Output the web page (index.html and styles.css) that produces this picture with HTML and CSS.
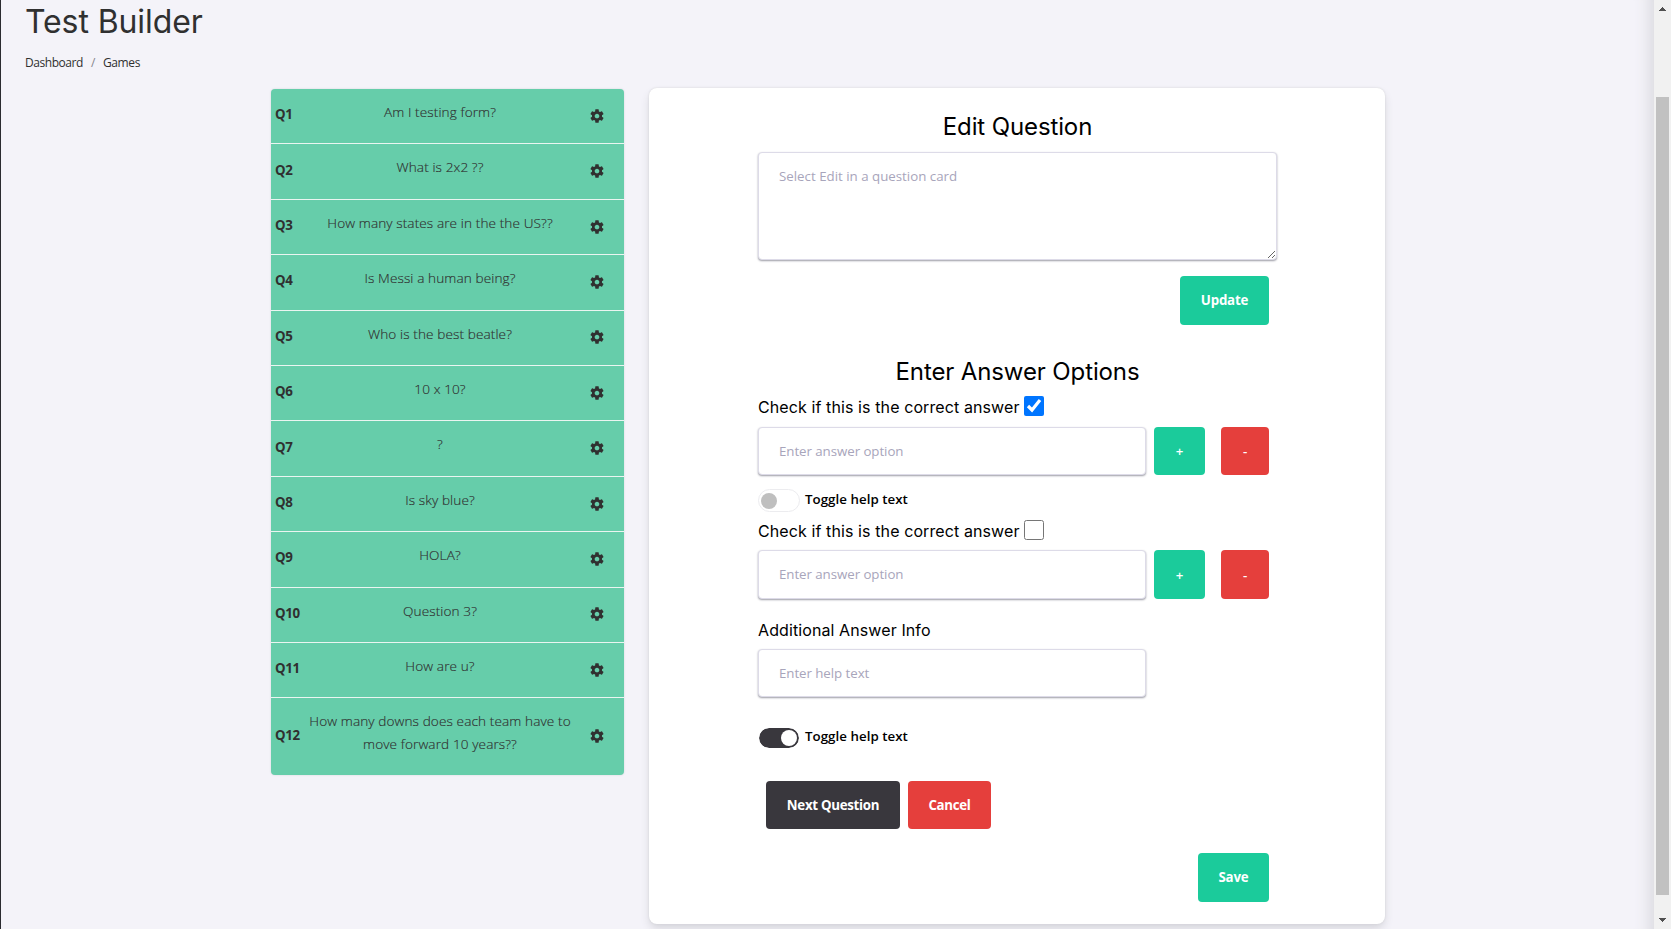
FILE: index.html
```
<!DOCTYPE html>
<html lang="en">
<head>
<meta charset="utf-8">
<title>Test Builder</title>
<link rel="stylesheet" href="styles.css">
</head>
<body>
<svg class="defs" width="0" height="0" aria-hidden="true">
  <symbol id="gear" viewBox="0 0 24 24"><path d="M19.43 12.98c.04-.32.07-.64.07-.98s-.03-.66-.07-.98l2.11-1.65c.19-.15.24-.42.12-.64l-2-3.46c-.12-.22-.39-.3-.61-.22l-2.49 1c-.52-.4-1.08-.73-1.69-.98l-.38-2.65A.488.488 0 0 0 14 2h-4c-.25 0-.46.18-.49.42l-.38 2.65c-.61.25-1.17.59-1.69.98l-2.49-1c-.23-.09-.49 0-.61.22l-2 3.46c-.13.22-.07.49.12.64l2.11 1.65c-.04.32-.07.65-.07.98s.03.66.07.98l-2.11 1.65c-.19.15-.24.42-.12.64l2 3.46c.12.22.39.3.61.22l2.49-1c.52.4 1.08.73 1.69.98l.38 2.65c.03.24.24.42.49.42h4c.25 0 .46-.18.49-.42l.38-2.65c.61-.25 1.17-.59 1.69-.98l2.49 1c.23.09.49 0 .61-.22l2-3.46c.12-.22.07-.49-.12-.64l-2.11-1.65zM12 15.5c-1.93 0-3.5-1.57-3.5-3.5s1.570-3.500 3.500-3.500 3.500 1.570 3.500 3.500-1.570 3.500-3.500 3.500z"/></symbol>
</svg>
<div class="app">
  <main class="page">
    <h1 class="title">Test Builder</h1>
    <nav class="crumbs"><span class="crumb-home">Dashboard</span><span class="sep">/</span><span class="crumb-current">Games</span></nav>
    <div class="columns">
      <ul class="questions">
        <li class="question"><b class="num">Q1</b><p class="text">Am I testing form?</p><svg class="gear"><use href="#gear"/></svg></li>
        <li class="question"><b class="num">Q2</b><p class="text">What is 2x2 ??</p><svg class="gear"><use href="#gear"/></svg></li>
        <li class="question"><b class="num">Q3</b><p class="text">How many states are in the the US??</p><svg class="gear"><use href="#gear"/></svg></li>
        <li class="question"><b class="num">Q4</b><p class="text">Is Messi a human being?</p><svg class="gear"><use href="#gear"/></svg></li>
        <li class="question"><b class="num">Q5</b><p class="text">Who is the best beatle?</p><svg class="gear"><use href="#gear"/></svg></li>
        <li class="question"><b class="num">Q6</b><p class="text">10 x 10?</p><svg class="gear"><use href="#gear"/></svg></li>
        <li class="question"><b class="num">Q7</b><p class="text">?</p><svg class="gear"><use href="#gear"/></svg></li>
        <li class="question"><b class="num">Q8</b><p class="text">Is sky blue?</p><svg class="gear"><use href="#gear"/></svg></li>
        <li class="question"><b class="num">Q9</b><p class="text">HOLA?</p><svg class="gear"><use href="#gear"/></svg></li>
        <li class="question"><b class="num">Q10</b><p class="text">Question 3?</p><svg class="gear"><use href="#gear"/></svg></li>
        <li class="question"><b class="num">Q11</b><p class="text">How are u?</p><svg class="gear"><use href="#gear"/></svg></li>
        <li class="question"><b class="num">Q12</b><p class="text">How many downs does each team have to<br>move forward 10 years??</p><svg class="gear"><use href="#gear"/></svg></li>
      </ul>
      <form class="card">
        <h2 class="heading">Edit Question</h2>
        <textarea class="field area" placeholder="Select Edit in a question card"></textarea>
        <div class="actions update-row"><button type="button" class="btn green update">Update</button></div>
        <h2 class="heading">Enter Answer Options</h2>
        <label class="check"><span class="label">Check if this is the correct answer</span><input type="checkbox" class="box" checked></label>
        <div class="answer">
          <input class="field" placeholder="Enter answer option">
          <button type="button" class="btn green plus">+</button>
          <button type="button" class="btn red minus">-</button>
        </div>
        <div class="toggle"><span class="switch"></span><span class="toggle-text">Toggle help text</span></div>
        <label class="check second"><span class="label">Check if this is the correct answer</span><input type="checkbox" class="box"></label>
        <div class="answer tall">
          <input class="field" placeholder="Enter answer option">
          <button type="button" class="btn green plus">+</button>
          <button type="button" class="btn red minus">-</button>
        </div>
        <div class="label info">Additional Answer Info</div>
        <div class="answer"><input class="field" placeholder="Enter help text"></div>
        <div class="toggle lower"><span class="switch on"></span><span class="toggle-text">Toggle help text</span></div>
        <div class="nav-row">
          <button type="button" class="btn dark next">Next Question</button>
          <button type="button" class="btn red cancel">Cancel</button>
        </div>
        <div class="actions"><button type="button" class="btn green save">Save</button></div>
      </form>
    </div>
  </main>
  <div class="scrollbar">
    <svg class="arrow" viewBox="0 0 7 4"><path d="M3 0h1v1h1v1h1v1h1v1H0V3h1V2h1V1h1z"/></svg>
    <div class="thumb"></div>
    <svg class="arrow" viewBox="0 0 7 4"><path d="M0 0h7v1H6v1H5v1H4v1H3V3H2V2H1V1H0z"/></svg>
  </div>
</div>
</body>
</html>
```
FILE: styles.css
```
* { box-sizing: border-box; }
html, body { margin: 0; height: 100%; overflow: hidden; }
body { font-family: "Open Sans", "Noto Sans", sans-serif; color: #303030; background: #f4f3f9; }
h1, h2, p, ul { margin: 0; padding: 0; font-weight: 400; }
.defs { display: block; }
.app { display: flex; height: 929px; border-left: 1px solid #2b2b30; }
.page { flex: 1; height: 929px; overflow: hidden; padding-left: 24px; box-shadow: inset -20px 0 16px -16px #d8d8dd; }
.title { height: 42px; padding-top: 1px; font: 400 32px/42px Inter, sans-serif; letter-spacing: -.1px; white-space: nowrap; }
.crumbs { display: flex; margin-top: 12px; height: 18px; font-size: 12px; line-height: 18px; }
.crumb-home { width: 66px; letter-spacing: -.45px; }
.sep { width: 12px; color: #85858c; }
.crumb-current { letter-spacing: -.4px; }
.columns { display: flex; align-items: flex-start; gap: 25px; padding: 16px 0 0 246px; }
.questions { width: 353px; margin-top: 1px; background: #66cdaa; border-radius: 4px; overflow: hidden; list-style: none; box-shadow: 0 0 2px #cfd0d8; }
.question { display: flex; align-items: center; height: 55.4px; padding-left: 4px; border-bottom: 1px solid #eaf5f1; }
.question:last-child { height: 76.6px; border-bottom: 0; }
.num { width: 30px; font-size: 13.3px; font-weight: 700; line-height: 23px; letter-spacing: -.3px; position: relative; top: -1.5px; }
.text { width: 270px; height: 100%; padding-top: 11px; font-size: 13.6px; line-height: 23px; font-weight: 300; letter-spacing: .1px; -webkit-text-stroke: .15px #303030; text-align: center; white-space: nowrap; }
.gear { width: 16px; height: 16px; margin-left: 14px; fill: #303030; position: relative; top: -.4px; }
.card { width: 736px; height: 836px; padding: 23px 116px 0 109px; background: #fff; border-radius: 8px; box-shadow: 0 5px 10px -1px #d2d2d8, 0 0 2px #d2d2d4; color: #000; }
.heading { height: 31px; width: 519px; font: 400 24px/31px Inter, sans-serif; letter-spacing: -.12px; text-align: center; white-space: nowrap; }
.field { display: block; margin: 0; width: 388px; height: 100%; padding: 0 20px; border: 1px solid #dddbe8; border-radius: 4px; background: #fff; box-shadow: 0 1px 2px #9c9ca6; font: 400 13.3px/20px "Open Sans", "Noto Sans", sans-serif; letter-spacing: -.06px; outline: 0; }
.field::placeholder { color: #a8a5bb; opacity: 1; }
.area { width: 519px; height: 108px; margin-top: 10px; padding-top: 13px; resize: both; letter-spacing: 0; }
.actions { display: flex; justify-content: flex-end; width: 511px; }
.update-row { margin: 16px 0 31px; }
.btn { flex: none; border: 0; border-radius: 4px; height: 48px; padding: 0; color: #fff; font: 600 13.3px/20px "Open Sans", "Noto Sans", sans-serif; letter-spacing: -.1px; }
.green { background: #1bcb9b; }
.red { background: #e53f3c; }
.dark { background: #39373d; }
.btn.update { width: 89px; height: 49px; padding-bottom: 2px; font-weight: 700; letter-spacing: -.2px; }
.check { display: flex; align-items: center; height: 20px; margin-top: 9px; }
.label { width: 266px; font: 400 16px/20px Inter, sans-serif; letter-spacing: .1px; white-space: nowrap; }
.check .label { position: relative; top: 1px; }
.box { width: 20px; height: 20px; margin: 0; }
.answer { display: flex; height: 48px; margin-top: 11px; }
.plus { width: 51px; margin-left: 8px; }
.minus { width: 48px; margin-left: 16px; }
.tall { height: 49px; margin-top: 10px; }
.tall .btn { height: 49px; }
.tall .field { padding-bottom: 2px; }
.toggle { display: flex; height: 23px; margin-top: 14px; }
.switch { width: 42px; height: 23px; padding: 3px 2px; border: 1px solid #ececef; border-radius: 12px; background: #fff; }
.switch::before { content: ""; display: block; width: 16px; height: 16px; border-radius: 50%; background: #bfbfbf; }
.on { height: 22px; background: #39373d; border: 1px solid #fff; background-clip: padding-box; padding: 2px 2px 2px 22px; }
.on::before { background: #fff; }
.toggle-text { margin-left: 5px; font-size: 13.3px; font-weight: 600; line-height: 21px; letter-spacing: .04px; white-space: nowrap; }
.second { margin-top: 8px; }
.info { height: 20px; margin-top: 21px; }
.info + .answer { margin-top: 9px; }
.lower { margin-top: 30px; }
.lower .toggle-text { line-height: 19px; }
.nav-row { display: flex; gap: 8px; margin: 31px 0 24px; padding-left: 8px; }
.next { width: 134px; }
.cancel { width: 83px; }
.btn.save { width: 71px; height: 49px; padding-bottom: 2px; font-weight: 700; letter-spacing: -.2px; }
.btn.next, .btn.cancel { font-weight: 700; letter-spacing: -.3px; }
.scrollbar { display: flex; flex-direction: column; align-items: center; width: 17px; height: 929px; background: #f1f1f1; padding: 7px 0; }
.arrow { flex: none; width: 7px; height: 4px; fill: #505050; }
.thumb { flex: none; width: 13px; height: 798px; margin: 86px 0 23px; background: #c1c1c1; }
```
